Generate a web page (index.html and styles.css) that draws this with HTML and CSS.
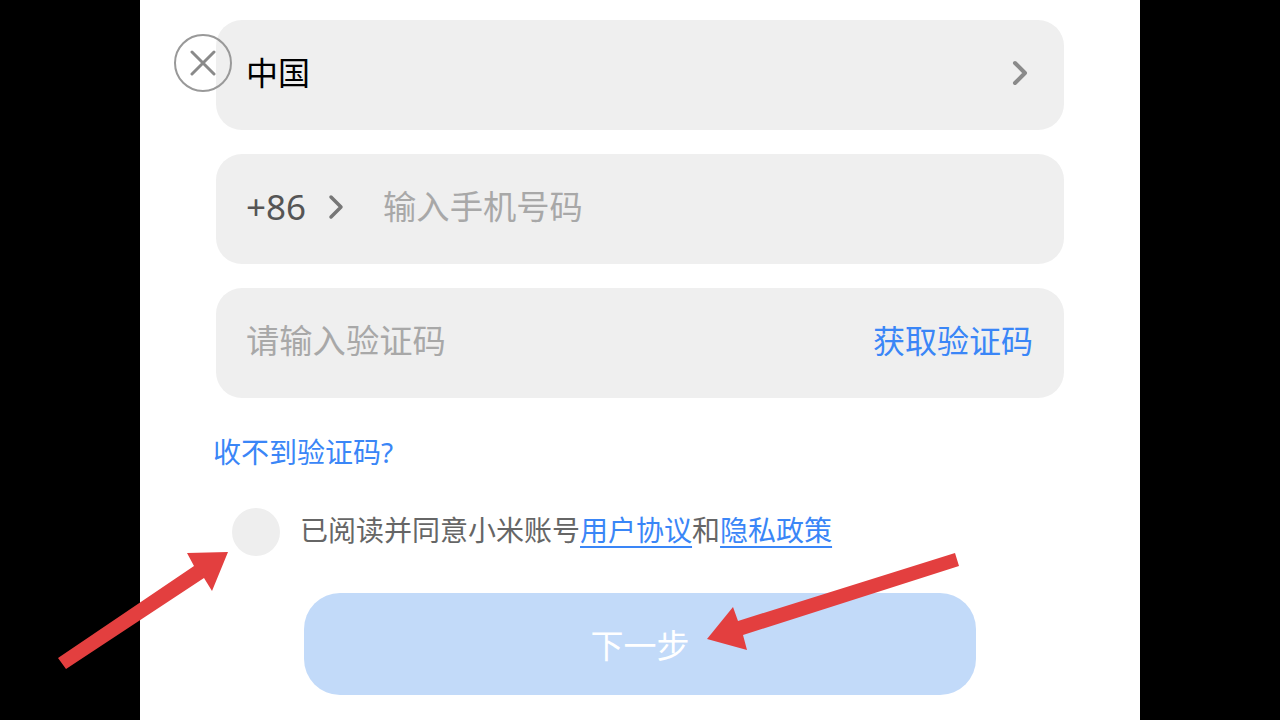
FILE: index.html
```html
<!DOCTYPE html>
<html lang="zh-CN">
<head>
    <meta charset="UTF-8">
    <meta name="viewport" content="width=device-width, initial-scale=1.0">
    <title>小米账号 - 手机号登录</title>
    <link rel="stylesheet" href="styles.css">
</head>
<body>
    <div class="sheet">
        <button class="close-btn" aria-label="关闭">
            <svg width="26" height="26" viewBox="0 0 26 26">
                <path d="M2 2 L24 24 M24 2 L2 24" stroke="#8a8a8a" stroke-width="3" stroke-linecap="round" fill="none"/>
            </svg>
        </button>

        <div class="form">
            <div class="field">
                <span class="region">中国</span>
                <svg class="chevron" width="16" height="26" viewBox="0 0 16 26">
                    <path d="M3 3 L13 13 L3 23" stroke="#8a8a8a" stroke-width="4" stroke-linecap="round" stroke-linejoin="round" fill="none"/>
                </svg>
            </div>

            <div class="field">
                <span class="code">+86</span>
                <svg class="chevron small" width="16" height="26" viewBox="0 0 16 26">
                    <path d="M3 3 L13 13 L3 23" stroke="#777" stroke-width="3.5" stroke-linecap="round" stroke-linejoin="round" fill="none"/>
                </svg>
                <span class="placeholder phone">输入手机号码</span>
            </div>

            <div class="field">
                <span class="placeholder">请输入验证码</span>
                <a class="get-code">获取验证码</a>
            </div>

            <a class="no-code">收不到验证码?</a>

            <div class="agree">
                <span class="check"></span>
                <p>已阅读并同意小米账号<a>用户协议</a>和<a>隐私政策</a></p>
            </div>

            <button class="next-btn">下一步</button>
        </div>
    </div>

    <!-- 标注箭头 -->
    <svg class="marks" width="1280" height="720" viewBox="0 0 1280 720">
        <polygon points="58,658 194,566 187,553 228,552 212,591 204,578 66,669" fill="#e33f3f"/>
        <polygon points="955,553 738,621 733,607 707,639 747,650 743,635 959,566" fill="#e33f3f"/>
    </svg>
</body>
</html>
```

FILE: styles.css
```css
* {
    margin: 0;
    padding: 0;
    box-sizing: border-box;
    font-family: 'Noto Sans', 'Noto Sans CJK SC', sans-serif;
}

body {
    background: #000;
    width: 1280px;
    height: 720px;
    overflow: hidden;
    position: relative;
}

.sheet {
    width: 1000px;
    height: 720px;
    margin: 0 auto;
    background: #fff;
    position: relative;
}

.form {
    padding: 20px 76px 0;
    display: flex;
    flex-direction: column;
}

.field {
    height: 110px;
    background: #efefef;
    border-radius: 26px;
    display: flex;
    align-items: center;
    padding: 0 31px 5px 30px;
    margin-bottom: 24px;
    line-height: 1;
}

.region {
    font-size: 32px;
    color: #000;
    flex: 1;
}

.chevron {
    margin-right: 5px;
}

.code {
    font-size: 35px;
    color: #555;
}

.chevron.small {
    margin: 0 0 0 22px;
}

.placeholder {
    font-size: 33.3px;
    color: #a8a8a8;
    flex: 1;
}

.placeholder.phone {
    margin-left: 39px;
}

.get-code {
    font-size: 32px;
    color: #3a86f7;
}

.no-code {
    font-size: 28px;
    color: #3a86f7;
    line-height: 40px;
    margin: 10px 0 0 -3px;
}

.agree {
    display: flex;
    align-items: center;
    gap: 20px;
    margin: 36px 0 0 16px;
}

.check {
    width: 48px;
    height: 48px;
    border-radius: 50%;
    background: #eee;
}

.agree p {
    font-size: 28px;
    color: #666;
    line-height: 1;
    padding-bottom: 4px;
}

.agree a {
    color: #3a86f7;
    text-decoration: underline;
    text-underline-offset: 5px;
}

.next-btn {
    width: 672px;
    height: 102px;
    margin: 37px 0 0 88px;
    border: none;
    border-radius: 36px;
    background: #c2daf9;
    color: #fff;
    font-size: 33px;
}

.close-btn {
    position: absolute;
    left: 34px;
    top: 34px;
    width: 58px;
    height: 58px;
    border-radius: 50%;
    border: 2px solid #999;
    background: transparent;
    display: flex;
    align-items: center;
    justify-content: center;
    z-index: 2;
}

.marks {
    position: absolute;
    left: 0;
    top: 0;
    pointer-events: none;
}
```
